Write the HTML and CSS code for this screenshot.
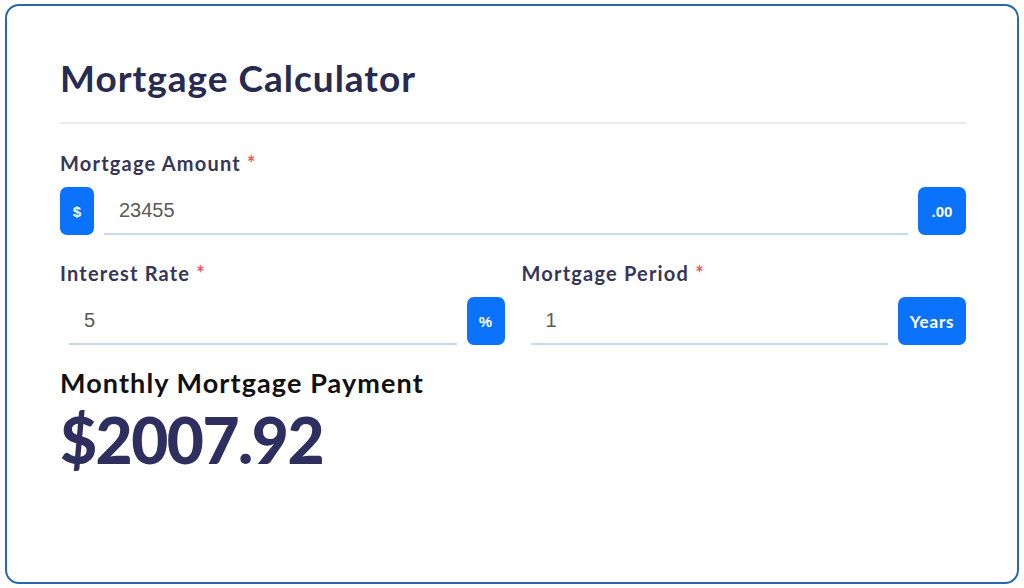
FILE: index.html
```html
<!DOCTYPE html>
<html lang="en">
<head>
  <meta charset="UTF-8">
  <meta name="viewport" content="width=device-width, initial-scale=1.0">
  <title>Mortgage Calculator</title>
  <link rel="stylesheet" href="styles.css">
</head>
<body>

<div class="card">
  <h1 class="title">Mortgage Calculator</h1>

  <!-- Amount -->
  <div class="field">
    <label for="amount">Mortgage Amount <span class="req">*</span></label>
    <div class="group">
      <span class="addon addon-sm">$</span>
      <input type="text" id="amount" class="input" value="23455">
      <span class="addon">.00</span>
    </div>
  </div>

  <!-- Rate and period -->
  <div class="cols">
    <div class="field">
      <label for="rate">Interest Rate <span class="req">*</span></label>
      <div class="group group-indent">
        <input type="text" id="rate" class="input" value="5">
        <span class="addon addon-pct">%</span>
      </div>
    </div>
    <div class="field">
      <label for="period">Mortgage Period <span class="req">*</span></label>
      <div class="group group-indent">
        <input type="text" id="period" class="input" value="1">
        <span class="addon addon-wide">Years</span>
      </div>
    </div>
  </div>

  <!-- Result -->
  <h2 class="result-label">Monthly Mortgage Payment</h2>
  <div class="result">$2007.92</div>
</div>

</body>
</html>
```

FILE: styles.css
```css
/* General Styling */
body {
  margin: 0;
  background: #fff;
  font-family: 'Lato', 'Noto Sans', sans-serif;
  color: #2b2c50;
}

.card {
  box-sizing: border-box;
  margin: 4px 5px;
  height: 580px;
  padding: 51px 51px 0 53px;
  border: 2px solid #2a66b2;
  border-radius: 14px;
}

.title {
  margin: 0;
  font-size: 37px;
  font-weight: 700;
  line-height: 42px;
  letter-spacing: 1px;
  color: #282a4f;
  padding-bottom: 23px;
  border-bottom: 2px solid #e8eaee;
}

.field label {
  display: block;
  font-size: 20px;
  font-weight: 700;
  line-height: 24px;
  letter-spacing: 1.2px;
  color: #363659;
  margin-bottom: 12px;
}

.req {
  color: #e8575c;
}

.field:first-of-type {
  margin-top: 27px;
}

.group {
  display: flex;
  align-items: center;
  gap: 10px;
}

.group-indent {
  padding-left: 9px;
}

.input {
  flex: 1;
  min-width: 0;
  height: 46px;
  padding: 0 15px;
  border: none;
  border-bottom: 2px solid #c8dbf6;
  font-family: 'Liberation Sans', Arial, sans-serif;
  font-size: 20px;
  color: #5a5a5a;
  outline: none;
  background: transparent;
}

.addon {
  display: flex;
  align-items: center;
  justify-content: center;
  width: 48px;
  height: 48px;
  border-radius: 7px;
  background: #0b72fb;
  color: #fff;
  font-family: 'Liberation Sans', Arial, sans-serif;
  font-size: 15px;
  font-weight: 700;
}

.addon-sm {
  width: 34px;
}

.addon-pct {
  width: 38px;
}

.addon-wide {
  width: 68px;
  font-family: 'Lato', sans-serif;
  font-size: 17px;
  letter-spacing: 0.8px;
}

.cols {
  display: grid;
  grid-template-columns: 1fr 1fr;
  gap: 17px;
  margin-top: 26px;
}

.cols .field:first-of-type {
  margin-top: 0;
}

.result-label {
  margin: 22px 0 0;
  font-size: 27px;
  font-weight: 700;
  line-height: 32px;
  letter-spacing: 1.1px;
  color: #111;
}

.result {
  margin-top: 6px;
  font-size: 64px;
  font-weight: 900;
  line-height: 70px;
  letter-spacing: -1.5px;
  color: #2e2f5f;
}
```
